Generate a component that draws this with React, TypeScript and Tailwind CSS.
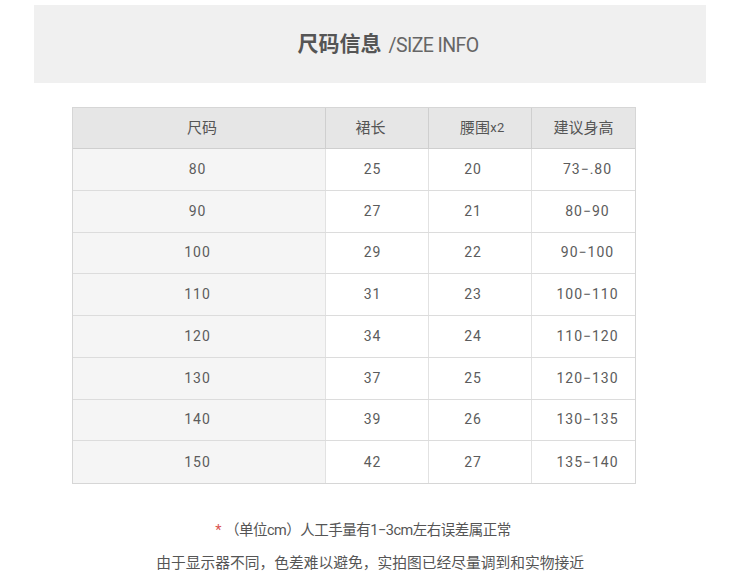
const ROWS: [string, string, string, string][] = [
  ["80", "25", "20", "73-.80"],
  ["90", "27", "21", "80-90"],
  ["100", "29", "22", "90-100"],
  ["110", "31", "23", "100-110"],
  ["120", "34", "24", "110-120"],
  ["130", "37", "25", "120-130"],
  ["140", "39", "26", "130-135"],
  ["150", "42", "27", "135-140"],
];

const font = "font-['Roboto','Noto_Sans_CJK_SC',sans-serif]";

export default function App() {
  return (
    <div className={`w-[750px] h-[586px] bg-white text-[#555] ${font} pt-[5px]`}>
      <div className="mx-[34px] w-[672px] h-[78px] bg-[#f0f0f0] flex items-center justify-center pl-[36px] pt-[1px]">
        <span className="text-[21px] font-bold text-[#555]">尺码信息</span>
        <span className="ml-[7px] text-[19.5px] text-[#666] tracking-[-0.6px] pt-[3px]">/SIZE INFO</span>
      </div>

      <div className="ml-[72px] mt-[24px] w-[564px] border border-[#d6d6d6]">
        <div className="grid grid-cols-[253px_103px_103px_103px] h-[41px] bg-[#e6e6e6] text-[15px] border-b border-[#cfcfcf]">
          <div className="flex items-center justify-center border-r border-[#cfcfcf] pl-[6px]">尺码</div>
          <div className="flex items-center justify-center border-r border-[#cfcfcf] pr-[13px]">裙长</div>
          <div className="flex items-center justify-center border-r border-[#cfcfcf] pl-[5px]">
            腰围<span className="text-[13px] tracking-[0.5px]">x2</span>
          </div>
          <div className="flex items-center justify-center">建议身高</div>
        </div>
        {ROWS.map((r, i) => (
          <div
            key={r[0]}
            className={`grid grid-cols-[253px_103px_103px_103px] h-[41.75px] text-[14px] tracking-[1px] text-[#5c5c5c] ${
              i < ROWS.length - 1 ? "border-b border-[#dcdcdc]" : ""
            }`}
          >
            <div className="flex items-center justify-center bg-[#f5f5f5] border-r border-[#e2e2e2] pr-[3px]">{r[0]}</div>
            <div className="flex items-center justify-center border-r border-[#e2e2e2] pr-[9px]">{r[1]}</div>
            <div className="flex items-center justify-center border-r border-[#e2e2e2] pr-[14px]">{r[2]}</div>
            <div className="flex items-center justify-center pl-[8px]">{r[3].replace("-", "−")}</div>
          </div>
        ))}
      </div>

      <div className="mt-[36px] flex flex-col items-center text-[14.75px] text-[#555] gap-[10px]">
        <div className="pr-[24px] text-[14.5px] tracking-[-0.5px]">
          <span className="text-[#d9534f] mr-[4px]">*</span>（单位cm）人工手量有1−3cm左右误差属正常
        </div>
        <div className="pr-[10px]">由于显示器不同，色差难以避免，实拍图已经尽量调到和实物接近</div>
      </div>
    </div>
  );
}
